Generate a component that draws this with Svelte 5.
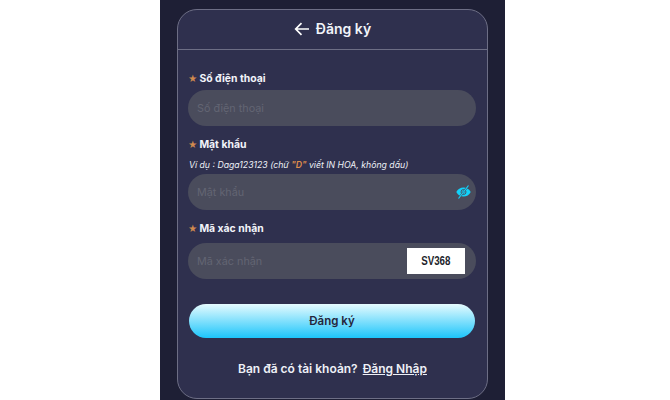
<script>
  let phone = '';
  let password = '';
  let captcha = '';
</script>

<div class="page">
  <div class="card">
    <header class="card-head">
      <svg class="back" width="16" height="14" viewBox="0 0 16 14" fill="none" stroke="currentColor" stroke-width="1.7">
        <path d="M15 7H2M7.5 1.2 1.7 7l5.8 5.8" />
      </svg>
      <h2>Đăng ký</h2>
    </header>

    <form class="form" on:submit|preventDefault>
      <div class="field">
        <label for="phone"><span class="star">★</span>Số điện thoại</label>
        <div class="input-wrap">
          <input id="phone" placeholder="Số điện thoại" bind:value={phone} />
        </div>
      </div>

      <div class="field pass">
        <label for="pass"><span class="star">★</span>Mật khẩu</label>
        <p class="hint">Ví dụ : Daga123123 (chữ <b>"D"</b> viết IN HOA, không dấu)</p>
        <div class="input-wrap">
          <input id="pass" type="password" placeholder="Mật khẩu" bind:value={password} />
          <svg class="eye" width="15" height="14" viewBox="0 0 15 14">
            <path d="M.3 7C1.800 4 4.400 2.400 7.500 2.400S13.200 4 14.700 7c-1.500 3-4.100 4.600-7.200 4.600S1.800 10 .3 7Z" fill="currentColor" />
            <circle cx="7.500" cy="7" r="2.500" fill="none" stroke="#4a4c5c" stroke-width=".9" />
            <path d="M12.500.5 2.500 13.500" stroke="#4a4c5c" stroke-width="2" />
            <path d="M12.500.5 2.500 13.500" stroke="currentColor" stroke-width="1.200" />
          </svg>
        </div>
      </div>

      <div class="field captcha">
        <label for="code"><span class="star">★</span>Mã xác nhận</label>
        <div class="input-wrap">
          <input id="code" placeholder="Mã xác nhận" bind:value={captcha} />
          <span class="code"><span>SV368</span></span>
        </div>
      </div>

      <button class="submit" type="submit">Đăng ký</button>
    </form>

    <p class="foot">Bạn đã có tài khoản? <a href="#login">Đăng Nhập</a></p>
  </div>
</div>

<style>
  :global(body) {
    background: #fff;
    font-family: Inter, "Noto Sans", sans-serif;
  }

  .page {
    width: 345px;
    height: 400px;
    margin-left: 160px;
    padding: 9px 17px 0;
    box-sizing: border-box;
    background: #1e1f35;
    overflow: hidden;
  }

  .card {
    width: 311px;
    height: 390px;
    box-sizing: border-box;
    background: #2f304e;
    border: 1px solid #6d6e85;
    border-radius: 20px;
  }

  .card-head {
    height: 40px;
    padding-bottom: 2px;
    box-sizing: border-box;
    display: flex;
    align-items: center;
    justify-content: center;
    gap: 6px;
    color: #fff;
    border-bottom: 1px solid #6d6e85;
  }

  .card-head h2 {
    margin: 0;
    font-size: 14px;
    font-weight: 600;
    color: #f2f4fa;
  }

  .back {
    color: #fff;
  }

  .form {
    padding: 19px 11px 0 10px;
  }

  .field label {
    display: block;
    height: 18px;
    line-height: 20px;
    font-size: 10.400px;
    font-weight: 700;
    color: #f2f4fa;
  }

  .star {
    color: #d08a4e;
    font-size: 9px;
    margin-right: 2px;
  }

  .input-wrap {
    position: relative;
    height: 36px;
    margin-top: 3px;
    background: #4a4c5c;
    border-radius: 18px;
  }

  .input-wrap input {
    width: 100%;
    height: 100%;
    box-sizing: border-box;
    padding: 0 9px;
    background: none;
    border: 0;
    outline: 0;
    font: 400 10.800px Inter, "Noto Sans", sans-serif;
    color: #fff;
  }

  .input-wrap input::placeholder {
    color: #636573;
  }

  .field.pass {
    margin-top: 9px;
  }

  .hint {
    margin: 5px 0 0 1px;
    height: 14px;
    line-height: 14px;
    font-size: 8.700px;
    font-style: italic;
    color: #eef0f7;
    white-space: nowrap;
  }

  .hint b {
    font-weight: 600;
    color: #e08f4c;
  }

  .field.pass .input-wrap {
    margin-top: 2px;
  }

  .eye {
    position: absolute;
    right: 5px;
    top: 11px;
    color: #12d2fa;
  }

  .field.captcha {
    margin-top: 9px;
  }

  .field.captcha .input-wrap {
    margin-top: 6px;
  }

  .code {
    position: absolute;
    right: 11px;
    top: 5px;
    width: 58px;
    height: 26px;
    display: flex;
    align-items: center;
    justify-content: center;
    background: #fff;
    color: #1e1f2c;
    font: 700 12.500px "Liberation Sans", sans-serif;
  }

  .code span {
    transform: scaleX(0.78);
  }

  .submit {
    display: block;
    width: 286px;
    height: 34px;
    margin: 25px 0 0 1px;
    padding: 0;
    border: 0;
    border-radius: 18px;
    background: linear-gradient(180deg, #e6fbfe 0%, #1cc5fb 100%);
    color: #25263c;
    font: 600 11.500px Inter, "Noto Sans", sans-serif;
  }

  .foot {
    margin: 23px 0 0;
    text-align: center;
    font-size: 12px;
    font-weight: 600;
    color: #eef0f7;
  }

  .foot a {
    margin-left: 2px;
    color: inherit;
    text-decoration: underline;
  }
</style>
